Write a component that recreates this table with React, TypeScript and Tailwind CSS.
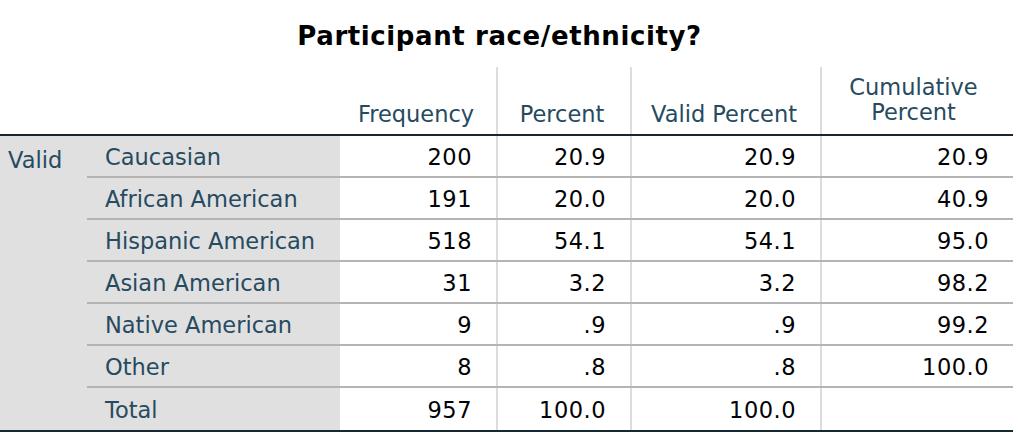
import React from "react";

const rows = [
  ["Caucasian", "200", "20.9", "20.9", "20.9"],
  ["African American", "191", "20.0", "20.0", "40.9"],
  ["Hispanic American", "518", "54.1", "54.1", "95.0"],
  ["Asian American", "31", "3.2", "3.2", "98.2"],
  ["Native American", "9", ".9", ".9", "99.2"],
  ["Other", "8", ".8", ".8", "100.0"],
  ["Total", "957", "100.0", "100.0", ""],
];

export default function App() {
  return (
    <div
      className="bg-white w-[1018px] h-[434px] overflow-hidden text-[22.5px]"
      style={{ fontFamily: "'DejaVu Sans', sans-serif" }}
    >
      <div className="w-[1013px] h-[67px] pt-[21px] pr-[14px] text-center">
        <span className="font-bold text-[26px] leading-[30px] tracking-[0.6px] text-black">
          Participant race/ethnicity?
        </span>
      </div>
      {/* header */}
      <div className="flex w-[1013px] h-[67px] text-[#264a60] leading-[26px]">
        <div className="w-[340px]" />
        <div className="w-[156px] flex items-end justify-center pb-[7px] pr-[4px]">Frequency</div>
        <div className="w-[134px] border-l-2 border-[#dcdcdc] flex items-end justify-center pb-[7px] pr-[4px]">Percent</div>
        <div className="w-[190px] border-l-2 border-[#dcdcdc] flex items-end justify-center pb-[7px] pr-[4px]">Valid Percent</div>
        <div className="w-[193px] border-l-2 border-[#dcdcdc] flex items-end justify-center pb-[9px] pr-[8px] text-center leading-[25px]">
          Cumulative<br />Percent
        </div>
      </div>
      {/* body */}
      <div className="flex w-[1013px] border-t-2 border-b-2 border-[#152935]">
        <div className="w-[87px] bg-[#e0e0e0] text-[#264a60] pl-[8px] pt-[8px]">Valid</div>
        <div className="flex-1 flex flex-col">
          {rows.map((r, i) => (
            <div
              key={r[0]}
              className={
                "flex h-[42px] " + (i < rows.length - 1 ? "border-b-2 border-[#b4b4b4]" : "")
              }
            >
              <div className="w-[253px] bg-[#e0e0e0] text-[#264a60] pl-[18px] pt-[3px] flex items-center">
                {r[0]}
              </div>
              <div className="w-[156px] text-[#010205] flex items-center justify-end pr-[24px] pt-[3px] tracking-[0.5px]">
                {r[1]}
              </div>
              <div className="w-[134px] border-l-2 border-[#dcdcdc] text-[#010205] flex items-center justify-end pr-[24px] pt-[3px] tracking-[0.5px]">
                {r[2]}
              </div>
              <div className="w-[190px] border-l-2 border-[#dcdcdc] text-[#010205] flex items-center justify-end pr-[24px] pt-[3px] tracking-[0.5px]">
                {r[3]}
              </div>
              <div className="w-[193px] border-l-2 border-[#dcdcdc] text-[#010205] flex items-center justify-end pr-[24px] pt-[3px] tracking-[0.5px]">
                {r[4]}
              </div>
            </div>
          ))}
        </div>
      </div>
    </div>
  );
}
